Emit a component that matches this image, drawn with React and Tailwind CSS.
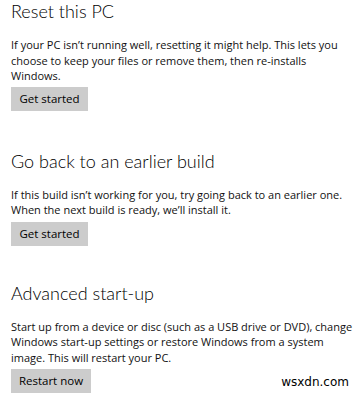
import React from "react";

const body = { fontFamily: '"Open Sans", "Noto Sans", sans-serif' };
const head = { fontFamily: 'Lato, "Open Sans", sans-serif' };

const Section = ({ title, lines, button, className, btnClass }) => {
  return (
    <div className={className}>
      <h2 className="text-[18px] leading-[24px] font-light text-black" style={head}>
        {title}
      </h2>
      <p className="mt-[14px] text-[11px] leading-[15.5px] text-[#111] whitespace-nowrap">
        {lines.map((l, i) => (
          <React.Fragment key={i}>
            {l}
            {i < lines.length - 1 && <br />}
          </React.Fragment>
        ))}
      </p>
      <button
        className={`h-[24px] ${btnClass} bg-[#cccccc] text-[11.5px] text-black flex items-center justify-center`}
      >
        {button}
      </button>
    </div>
  );
};

export default function App() {
  return (
    <div className="relative w-[360px] h-[395px] bg-white overflow-hidden px-[11px]" style={body}>
      <Section
        className="-mt-[1px]"
        title="Reset this PC"
        lines={[
          "If your PC isn’t running well, resetting it might help. This lets you",
          "choose to keep your files or remove them, then re-installs",
          "Windows.",
        ]}
        button="Get started"
        btnClass="mt-[3px] w-[77px]"
      />
      <Section
        className="mt-[38px]"
        title="Go back to an earlier build"
        lines={[
          "If this build isn’t working for you, try going back to an earlier one.",
          "When the next build is ready, we’ll install it.",
        ]}
        button="Get started"
        btnClass="mt-[4px] w-[77px]"
      />
      <Section
        className="mt-[35px]"
        title="Advanced start-up"
        lines={[
          "Start up from a device or disc (such as a USB drive or DVD), change",
          "Windows start-up settings or restore Windows from a system",
          "image. This will restart your PC.",
        ]}
        button="Restart now"
        btnClass="mt-[4px] w-[80px]"
      />
      <span
        className="absolute right-[11px] bottom-[4px] text-[12px] text-black"
        style={{ fontFamily: '"DejaVu Sans", sans-serif' }}
      >
        wsxdn.com
      </span>
    </div>
  );
}
